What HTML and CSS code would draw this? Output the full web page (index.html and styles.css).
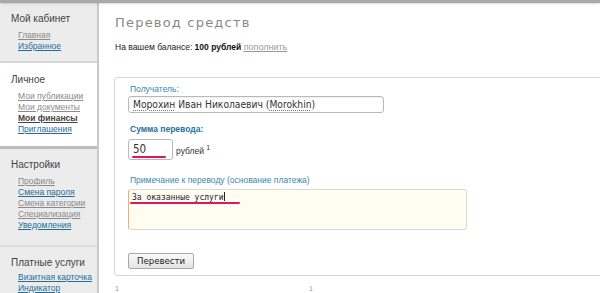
FILE: index.html
```html
<!DOCTYPE html>
<html lang="ru">
<head>
<meta charset="utf-8">
<title>Перевод средств</title>
<link rel="stylesheet" href="styles.css">
</head>
<body>
<div class="topbar"></div>
<div class="layout">
  <aside class="sidebar">
    <section class="sec sec-gray sec-first">
      <h3 class="sec-title">Мой кабинет</h3>
      <ul class="links">
        <li><a class="visited" href="#">Главная</a></li>
        <li><a href="#">Избранное</a></li>
      </ul>
    </section>
    <section class="sec sec-white">
      <h3 class="sec-title">Личное</h3>
      <ul class="links">
        <li><a class="visited" href="#">Мои публикации</a></li>
        <li><a class="visited" href="#">Мои документы</a></li>
        <li><a class="current" href="#">Мои финансы</a></li>
        <li><a href="#">Приглашения</a></li>
      </ul>
    </section>
    <section class="sec sec-gray sec-third">
      <h3 class="sec-title">Настройки</h3>
      <ul class="links">
        <li><a class="visited" href="#">Профиль</a></li>
        <li><a href="#">Смена пароля</a></li>
        <li><a class="visited" href="#">Смена категории</a></li>
        <li><a class="visited" href="#">Специализация</a></li>
        <li><a href="#">Уведомления</a></li>
      </ul>
    </section>
    <section class="sec sec-gray sec-fourth">
      <h3 class="sec-title">Платные услуги</h3>
      <ul class="links">
        <li><a href="#">Визитная карточка</a></li>
        <li><a href="#">Индикатор</a></li>
      </ul>
    </section>
  </aside>
  <main class="main">
    <h1 class="title">Перевод средств</h1>
    <p class="balance">На вашем балансе: <b>100 рублей</b> <a class="refill" href="#">пополнить</a></p>
    <form class="panel">
      <label class="label">Получатель:</label>
      <div class="input input-wide"><span class="spell">Морохин</span> Иван Николаевич (<span class="spell">Morokhin</span>)</div>
      <label class="label label-bold">Сумма перевода:</label>
      <div class="amount-row">
        <div class="input input-amount">50<span class="mark mark-amount"></span></div>
        <span class="unit">рублей <sup>1</sup></span>
      </div>
      <label class="label label-note">Примечание к переводу (основание платежа)</label>
      <div class="textarea"><span class="note-text">За оказанные услуги<span class="caret"></span><span class="mark mark-note"></span></span></div>
      <button class="btn" type="button">Перевести</button>
    </form>
    <div class="footnotes"><span>1</span><span class="fn2">1</span></div>
  </main>
</div>
</body>
</html>
```

FILE: styles.css
```css
html, body {
  margin: 0;
  padding: 0;
  overflow: hidden;
  background: #fff;
}
body {
  width: 600px;
  height: 293px;
  font-family: "Liberation Sans", Arial, sans-serif;
  color: #333;
}
.topbar {
  height: 3px;
  background: #a9a9a9;
  box-shadow: 0 1px 2px rgba(0,0,0,0.15);
  position: relative;
  z-index: 2;
}
.layout {
  display: flex;
  height: 290px;
}
.sidebar {
  width: 97px;
  flex: none;
  border-right: 2px solid #c9c9c9;
  background: #eeeeee;
}
.sec {
  padding: 11px 0 11px 0;
}
.sec-first {
  padding-top: 10px;
  padding-bottom: 9px;
  border-bottom: 2px solid #d6d6d6;
}
.sec-gray {
  background: #ececec;
}
.sec-white {
  background: #fff;
}
.sec-third {
  border-top: 3px solid #bdbdbd;
  padding-top: 10px;
  padding-bottom: 14px;
  border-bottom: 2px solid #dcdcdc;
}
.sec-fourth {
  padding-top: 10px;
}
.sec-fourth .sec-title {
  margin-bottom: 3px;
}
.sec-title {
  margin: 0 0 5px 11px;
  font-size: 10px;
  line-height: 12px;
  font-weight: normal;
  color: #444;
}
.links {
  list-style: none;
  margin: 0;
  padding: 0 0 0 18px;
}
.links li {
  font-size: 8.5px;
  line-height: 11px;
  white-space: nowrap;
}
.links a {
  color: #1f6d99;
  text-decoration: underline;
}
.links a.visited {
  color: #8a8a8a;
}
.links a.current {
  color: #444;
  font-weight: bold;
  text-decoration: underline;
}
.main {
  flex: 1;
  min-width: 0;
  padding: 10px 0 0 15px;
}
.title {
  margin: 0 0 0 1px;
  font-family: "DejaVu Sans", sans-serif;
  font-size: 13px;
  line-height: 20px;
  font-weight: normal;
  letter-spacing: 1.2px;
  color: #888;
}
.balance {
  margin: 8px 0 0 1px;
  font-size: 8.5px;
  line-height: 12px;
  color: #222;
}
.balance b {
  color: #111;
}
.refill {
  color: #999;
  font-size: 9px;
  text-decoration: underline;
}
.panel {
  margin: 24px -20px 0 0;
  border: 1px solid #d9d9d9;
  border-radius: 3px;
  padding: 6px 0 6px 13px;
  display: flex;
  flex-direction: column;
  align-items: flex-start;
}
.label {
  display: block;
  padding-left: 2px;
  font-size: 8.5px;
  line-height: 11px;
  color: #3a86ad;
  margin-bottom: 1px;
}
.label-bold {
  font-weight: bold;
  color: #27739a;
  margin-top: 11px;
  margin-bottom: 4px;
}
.label-note {
  margin-top: 15px;
  margin-bottom: 3px;
}
.input {
  box-sizing: border-box;
  border: 1px solid #b9b9b9;
  border-radius: 3px;
  background: #fff;
  font-family: "DejaVu Sans Condensed", "DejaVu Sans", sans-serif;
  font-stretch: condensed;
  color: #333;
  position: relative;
}
.input-wide {
  width: 256px;
  height: 17px;
  font-size: 10.2px;
  line-height: 15px;
  padding-left: 4px;
  box-shadow: inset 0 1px 1px rgba(0,0,0,0.06);
}
.spell {
  text-decoration: underline dotted #777;
  text-underline-offset: 2px;
}
.amount-row {
  display: flex;
  align-items: center;
}
.input-amount {
  width: 45px;
  height: 21px;
  font-size: 11.5px;
  line-height: 19px;
  padding-left: 4px;
}
.mark {
  position: absolute;
  height: 2px;
  border-radius: 1px;
  background: #e0175f;
}
.mark-amount {
  left: 3px;
  width: 34px;
  top: 16px;
}
.unit {
  margin-left: 3px;
  font-size: 8.5px;
  color: #333;
}
.unit sup {
  font-size: 7px;
}
.textarea {
  box-sizing: border-box;
  width: 339px;
  height: 41px;
  border: 1px solid #dedad0;
  border-left: 1px solid #e4b46e;
  border-radius: 3px;
  background: #fffdf2;
  padding: 2px 3px;
}
.note-text {
  position: relative;
  display: block;
  width: fit-content;
  font-family: "DejaVu Sans Mono", monospace;
  font-size: 8px;
  line-height: 10px;
  color: #222;
}
.caret {
  display: inline-block;
  width: 1px;
  height: 9px;
  background: #222;
  vertical-align: -1px;
}
.mark-note {
  left: -2px;
  width: 110px;
  top: 10px;
}
.btn {
  margin-top: 23px;
  box-sizing: border-box;
  width: 66px;
  height: 16px;
  padding: 0;
  border: 1px solid #a9a9a9;
  border-radius: 2px;
  background: linear-gradient(#fbfbfb, #e3e3e3);
  font-family: "DejaVu Sans Condensed", "DejaVu Sans", sans-serif;
  font-stretch: condensed;
  font-size: 9.5px;
  line-height: 14px;
  color: #222;
}
.footnotes {
  margin-top: 9px;
  font-size: 7px;
  line-height: 8px;
  color: #999;
  padding-left: 1px;
}
.fn2 {
  margin-left: 190px;
}
```
